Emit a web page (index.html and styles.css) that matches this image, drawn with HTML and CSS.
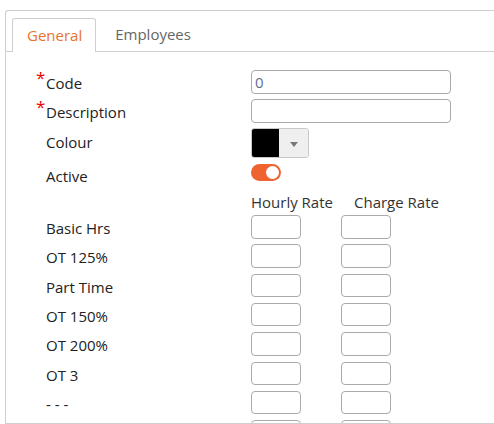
FILE: index.html
```html
<!DOCTYPE html>
<html>
<head>
<meta charset="utf-8">
<link rel="stylesheet" href="styles.css">
</head>
<body>
<div class="panel">
  <div class="tabs">
    <div class="tab active">General</div>
    <div class="tab">Employees</div>
  </div>
  <div class="form">
    <div class="row r-code">
      <div class="label"><span class="req">*</span>Code</div>
      <div class="ctrl"><input class="text" type="text" value="0"></div>
    </div>
    <div class="row r-desc">
      <div class="label"><span class="req">*</span>Description</div>
      <div class="ctrl"><input class="text" type="text" value=""></div>
    </div>
    <div class="row r-colour">
      <div class="label">Colour</div>
      <div class="ctrl">
        <div class="picker"><span class="swatch"></span><span class="drop"><span class="tri"></span></span></div>
      </div>
    </div>
    <div class="row r-active">
      <div class="label">Active</div>
      <div class="ctrl"><span class="toggle"><span class="knob"></span></span></div>
    </div>
    <div class="row r-head">
      <div class="label"></div>
      <div class="ctrl heads"><span class="h1">Hourly Rate</span><span class="h2">Charge Rate</span></div>
    </div>
    <div class="row rate"><div class="label">Basic Hrs</div><div class="ctrl pair"><input class="small"><input class="small"></div></div>
    <div class="row rate"><div class="label">OT 125%</div><div class="ctrl pair"><input class="small"><input class="small"></div></div>
    <div class="row rate"><div class="label">Part Time</div><div class="ctrl pair"><input class="small"><input class="small"></div></div>
    <div class="row rate"><div class="label">OT 150%</div><div class="ctrl pair"><input class="small"><input class="small"></div></div>
    <div class="row rate"><div class="label">OT 200%</div><div class="ctrl pair"><input class="small"><input class="small"></div></div>
    <div class="row rate"><div class="label">OT 3</div><div class="ctrl pair"><input class="small"><input class="small"></div></div>
    <div class="row rate"><div class="label">- - -</div><div class="ctrl pair"><input class="small"><input class="small"></div></div>
    <div class="row rate"><div class="label"></div><div class="ctrl pair"><input class="small"><input class="small"></div></div>
  </div>
</div>
</body>
</html>
```

FILE: styles.css
```css
html, body {
  margin: 0;
  padding: 0;
  overflow: hidden;
  background: #fff;
}
body {
  font-family: "Open Sans", "Noto Sans", sans-serif;
  font-size: 15px;
  color: #222;
  width: 494px;
  height: 424px;
}
.panel {
  margin: 10px 0 0 5px;
  width: 489px;
  border: 1px solid #cfcfcf;
  border-radius: 3px 0 0 0;
  border-right: none;
  height: 414px;
  box-sizing: border-box;
  overflow: hidden;
}
.tabs {
  display: flex;
  padding: 7px 0 0 6px;
  border-bottom: 1px solid #cfcfcf;
  height: 33px;
}
.tab {
  height: 33px;
  line-height: 32px;
  padding: 0 19px 0 19px;
  color: #666;
  box-sizing: border-box;
  font-size: 15px;
}
.tab.active {
  color: #e8742c;
  border: 1px solid #cfcfcf;
  border-bottom: none;
  border-radius: 3px 3px 0 0;
  background: #fff;
  height: 34px;
  margin-bottom: -1px;
  padding: 0 13px 0 14px;
}
.form {
  padding-top: 18px;
}
.row {
  display: grid;
  grid-template-columns: 245px 1fr;
  align-items: start;
}
.label {
  padding-left: 40px;
  line-height: 24px;
  padding-top: 1px;
}
.req {
  display: inline-block;
  width: 10px;
  margin-left: -10px;
  color: #e00;
  font-size: 17px;
  line-height: 10px;
  vertical-align: 5px;
}
.r-code, .r-desc { height: 29px; }
.r-colour { height: 36px; }
.r-colour .label { padding-top: 2px; }
.r-active { height: 26px; }
.r-active .label { padding-top: 0; }
.r-head { height: 25px; }
.r-head .label { padding-top: 0; }
.rate { height: 29.33px; }
input {
  font-family: inherit;
  font-size: 15px;
  box-sizing: border-box;
  border: 1px solid #aaa;
  border-radius: 4px;
  margin: 0;
  outline: none;
  background: #fff;
}
.text {
  width: 200px;
  height: 24px;
  padding: 0 3px;
  color: #5b6f8f;
}
.picker {
  display: flex;
  width: 58px;
  height: 30px;
  border: 1px solid #c8c8c8;
  border-radius: 3px;
  box-sizing: border-box;
  overflow: hidden;
}
.swatch {
  width: 27px;
  background: #000;
}
.drop {
  flex: 1;
  background: #efefef;
  display: flex;
  align-items: center;
  justify-content: center;
}
.tri {
  width: 0;
  height: 0;
  border-left: 4px solid transparent;
  border-right: 4px solid transparent;
  border-top: 5px solid #777;
  margin-top: 2px;
}
.toggle {
  display: flex;
  align-items: center;
  justify-content: flex-end;
  width: 30px;
  height: 17px;
  border-radius: 9px;
  background: #ee6330;
  box-sizing: border-box;
  padding-right: 2px;
}
.knob {
  width: 13px;
  height: 13px;
  border-radius: 50%;
  background: #fff;
}
.heads {
  display: flex;
  line-height: 24px;
  color: #333;
}
.h1 { width: 103px; }
.pair {
  display: flex;
  gap: 40px;
}
.small {
  width: 50px;
  height: 23.5px;
  padding: 0 4px;
}
```
